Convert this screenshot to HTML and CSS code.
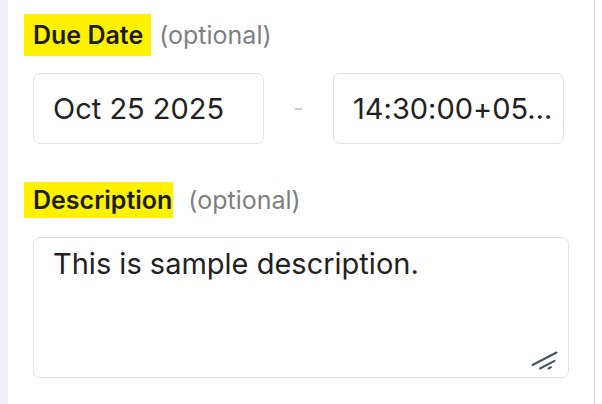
FILE: index.html
```html
<!DOCTYPE html>
<html>
<head>
<meta charset="utf-8">
<link rel="stylesheet" href="styles.css">
</head>
<body>
<div class="page">
  <div class="rail"></div>
  <div class="panel">
    <div class="label-row">
      <span class="label label-due">Due Date</span>
      <span class="optional opt-due">(optional)</span>
    </div>
    <div class="date-row">
      <div class="field">Oct 25 2025</div>
      <div class="sep"><span class="dash"></span></div>
      <div class="field">14:30:00+05…</div>
    </div>
    <div class="label-row label-row-desc">
      <span class="label label-desc">Description</span>
      <span class="optional opt-desc">(optional)</span>
    </div>
    <div class="textarea">
      This is sample description.
      <svg class="resizer" width="40" height="30" viewBox="0 0 40 30">
        <g stroke="#4a505e" stroke-width="2" stroke-linecap="round" fill="none">
          <line x1="4.5" y1="18" x2="28.5" y2="5.5"/>
          <line x1="12" y1="21.5" x2="26.5" y2="13.8"/>
          <line x1="20.5" y1="21.5" x2="23" y2="20.2"/>
        </g>
      </svg>
    </div>
  </div>
</div>
</body>
</html>
```

FILE: styles.css
```css
html, body {
  margin: 0;
  padding: 0;
  background: #ffffff;
}
body {
  width: 602px;
  height: 404px;
  overflow: hidden;
  font-family: Inter, "Noto Sans", sans-serif;
  color: #222222;
}
.page {
  display: flex;
  height: 404px;
}
.rail {
  width: 8px;
  background: #eef0f5;
  flex: none;
}
.panel {
  width: 587px;
  box-sizing: border-box;
  border-right: 1px solid #d8d8d8;
  padding: 14px 0 0 16px;
  flex: none;
}
.label-row {
  display: flex;
  align-items: center;
}
.label {
  background: #fff200;
  font-weight: 600;
  font-size: 25px;
  color: #1c1c1c;
  line-height: 26px;
}
.label-due {
  padding: 8px 8px 8px 9px;
}
.label-desc {
  padding: 5px 1px 5px 9px;
}
.optional {
  font-size: 25px;
  color: #7f7f7f;
  line-height: 26px;
}
.opt-due {
  margin-left: 8px;
}
.opt-desc {
  margin-left: 15px;
}
.date-row {
  display: flex;
  align-items: center;
  margin: 17px 0 0 9px;
}
.field {
  width: 231px;
  height: 71px;
  box-sizing: border-box;
  border: 1px solid #dfe2eb;
  border-radius: 7px;
  padding: 0 8px 0 19px;
  display: flex;
  align-items: center;
  font-size: 29px;
  white-space: nowrap;
  font-feature-settings: "calt" 0;
}
.sep {
  width: 69px;
  display: flex;
  justify-content: center;
}
.dash {
  width: 7px;
  height: 2px;
  background: #c6cad7;
}
.label-row-desc {
  margin-top: 38px;
}
.textarea {
  position: relative;
  margin: 19px 0 0 9px;
  width: 536px;
  height: 141px;
  box-sizing: border-box;
  border: 1px solid #dfe2eb;
  border-radius: 7px;
  padding: 8px 19px;
  font-size: 29px;
  line-height: 36px;
}
.resizer {
  position: absolute;
  right: 0;
  bottom: 0;
}
```
